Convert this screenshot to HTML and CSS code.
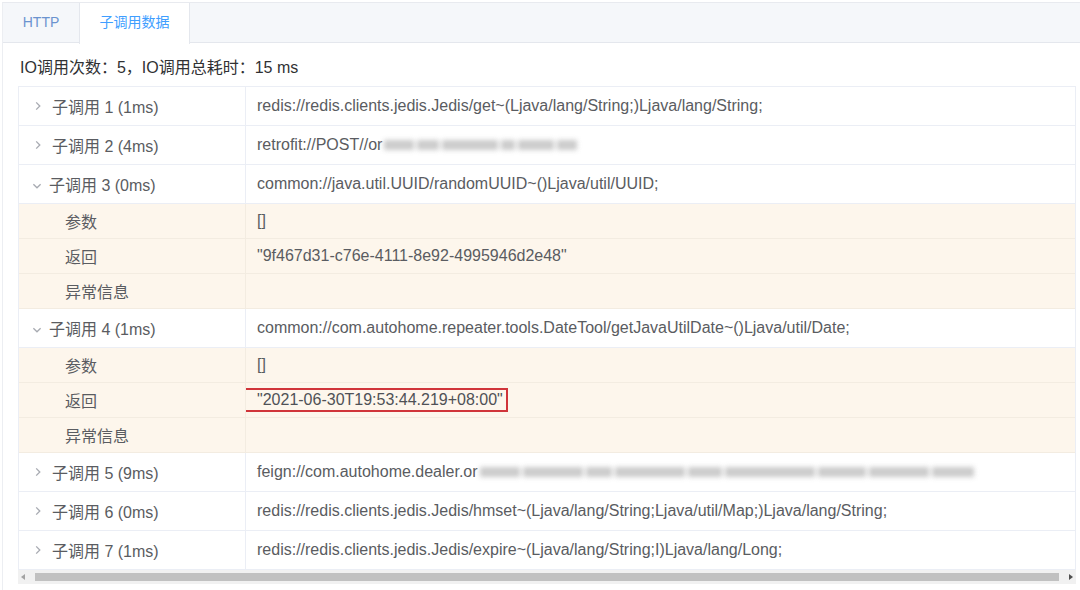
FILE: index.html
```html
<!DOCTYPE html>
<html>
<head>
<meta charset="utf-8">
<link rel="stylesheet" href="styles.css">
</head>
<body>
<div class="card">
  <div class="tabs">
    <div class="tab">HTTP</div>
    <div class="tab active">子调用数据</div>
  </div>
  <div class="content">
    <div class="summary">IO调用次数：5，IO调用总耗时：15 ms</div>
    <div class="table">
      <div class="row main">
        <div class="c1"><svg class="chev" viewBox="0 0 10 10"><path d="M3.5 2 L6.5 5 L3.5 8" /></svg>子调用 1 (1ms)</div>
        <div class="c2">redis://redis.clients.jedis.Jedis/get~(Ljava/lang/String;)Ljava/lang/String;</div>
      </div>
      <div class="row main">
        <div class="c1"><svg class="chev" viewBox="0 0 10 10"><path d="M3.5 2 L6.5 5 L3.5 8" /></svg>子调用 2 (4ms)</div>
        <div class="c2">retrofit://POST//or<span class="blur w210"><i style="width:30px"></i><i style="width:22px"></i><i style="width:56px"></i><i style="width:14px"></i><i style="width:36px"></i><i style="width:20px"></i></span></div>
      </div>
      <div class="row main">
        <div class="c1"><svg class="chev open" viewBox="0 0 10 10"><path d="M2 3.5 L5 6.5 L8 3.5" /></svg>子调用 3 (0ms)</div>
        <div class="c2">common://java.util.UUID/randomUUID~()Ljava/util/UUID;</div>
      </div>
      <div class="row detail">
        <div class="c1 lbl">参数</div>
        <div class="c2">[]</div>
      </div>
      <div class="row detail">
        <div class="c1 lbl">返回</div>
        <div class="c2">"9f467d31-c76e-4111-8e92-4995946d2e48"</div>
      </div>
      <div class="row detail">
        <div class="c1 lbl">异常信息</div>
        <div class="c2"></div>
      </div>
      <div class="row main">
        <div class="c1"><svg class="chev open" viewBox="0 0 10 10"><path d="M2 3.5 L5 6.5 L8 3.5" /></svg>子调用 4 (1ms)</div>
        <div class="c2">common://com.autohome.repeater.tools.DateTool/getJavaUtilDate~()Ljava/util/Date;</div>
      </div>
      <div class="row detail">
        <div class="c1 lbl">参数</div>
        <div class="c2">[]</div>
      </div>
      <div class="row detail">
        <div class="c1 lbl">返回</div>
        <div class="c2"><span class="boxed">"2021-06-30T19:53:44.219+08:00"</span></div>
      </div>
      <div class="row detail">
        <div class="c1 lbl">异常信息</div>
        <div class="c2"></div>
      </div>
      <div class="row main">
        <div class="c1"><svg class="chev" viewBox="0 0 10 10"><path d="M3.5 2 L6.5 5 L3.5 8" /></svg>子调用 5 (9ms)</div>
        <div class="c2">feign://com.autohome.dealer.or<span class="blur w500"><i style="width:40px"></i><i style="width:60px"></i><i style="width:26px"></i><i style="width:70px"></i><i style="width:34px"></i><i style="width:90px"></i><i style="width:48px"></i><i style="width:60px"></i><i style="width:42px"></i></span></div>
      </div>
      <div class="row main">
        <div class="c1"><svg class="chev" viewBox="0 0 10 10"><path d="M3.5 2 L6.5 5 L3.5 8" /></svg>子调用 6 (0ms)</div>
        <div class="c2">redis://redis.clients.jedis.Jedis/hmset~(Ljava/lang/String;Ljava/util/Map;)Ljava/lang/String;</div>
      </div>
      <div class="row main last">
        <div class="c1"><svg class="chev" viewBox="0 0 10 10"><path d="M3.5 2 L6.5 5 L3.5 8" /></svg>子调用 7 (1ms)</div>
        <div class="c2">redis://redis.clients.jedis.Jedis/expire~(Ljava/lang/String;I)Ljava/lang/Long;</div>
      </div>
      <div class="hscroll">
        <span class="arr left"></span>
        <div class="thumb"></div>
        <span class="arr right"></span>
      </div>
    </div>
  </div>
</div>
</body>
</html>
```

FILE: styles.css
```css
* { box-sizing: border-box; }
html, body { margin: 0; padding: 0; background: #fff; }
body {
  font-family: "Liberation Sans", Arial, "Noto Sans CJK SC", sans-serif;
  font-size: 16px;
  color: #5a5c61;
  width: 1080px;
  height: 590px;
  overflow: hidden;
}
.card {
  margin: 2px 0 0 2px;
  border-left: 1px solid #eceef2;
  border-top: 1px solid #e8eaef;
  height: 588px;
}
.tabs {
  display: flex;
  height: 40px;
  background: #f5f7fa;
  border-bottom: 1px solid #e4e7ed;
}
.tab {
  height: 40px;
  line-height: 38px;
  font-size: 14px;
  color: #6b93cf;
  white-space: nowrap;
  text-align: center;
}
.tab:first-child { width: 76px; }
.tab.active {
  background: #fff;
  color: #409eff;
  border-left: 1px solid #e4e7ed;
  border-right: 1px solid #e4e7ed;
  width: 111px;
  height: 41px;
}
.content { padding: 15px 0 0 15px; }
.summary {
  color: #303133;
  height: 20px;
  line-height: 20px;
  margin-left: 2px;
}
.table {
  margin-top: 8px;
  width: 1058px;
  border-top: 1px solid #ebeef5;
  border-left: 1px solid #ebeef5;
  border-right: 1px solid #ebeef5;
}
.row {
  display: flex;
  border-bottom: 1px solid #ebeef5;
}
.row.main { height: 39px; background: #fff; }
.row.detail { height: 35px; background: #fdf6ec; border-bottom-color: #f3ece1; }
.row.last { border-bottom-color: #ebeef5; }
.c1 {
  width: 227px;
  flex: none;
  display: flex;
  align-items: center;
  padding-left: 13px;
  border-right: 1px solid #ebeef5;
  white-space: nowrap;
}
.row.detail .c1 { border-right-color: #f3ece1; }
.c1.lbl { padding-left: 46px; }
.c2 {
  flex: 1;
  display: flex;
  align-items: center;
  padding-left: 11px;
  white-space: nowrap;
  overflow: hidden;
}
.chev {
  width: 12px;
  height: 12px;
  margin-right: 8px;
  fill: none;
  stroke: #a8abb2;
  stroke-width: 1.1;
  flex: none;
}
.chev.open { margin-top: 4px; margin-left: -1px; margin-right: 6px; }
.boxed {
  border: 2px solid #d0343a;
  padding: 1px 3px 1px 11px;
  margin-left: -13px;
  line-height: 18px;
  color: #4f5156;
}
.blur {
  display: inline-flex;
  align-items: center;
  gap: 3px;
  height: 14px;
  margin-left: 2px;
  filter: blur(2.5px);
  opacity: 0.7;
}
.blur i {
  display: block;
  height: 10px;
  background: #b5b5b5;
}
.w210 { width: 210px; }
.w500 { width: 498px; }
.hscroll {
  height: 14px;
  display: flex;
  align-items: center;
  background: #f1f1f1;
  margin: 0 -1px;
  padding: 0 3px;
}
.thumb {
  flex: 1;
  height: 8px;
  background: #c1c1c1;
  margin: 0 10px;
}
.arr {
  width: 0; height: 0;
  border-top: 3px solid transparent;
  border-bottom: 3px solid transparent;
}
.arr.left { border-right: 4px solid #a3a3a3; }
.arr.right { border-left: 4px solid #505050; }
```
